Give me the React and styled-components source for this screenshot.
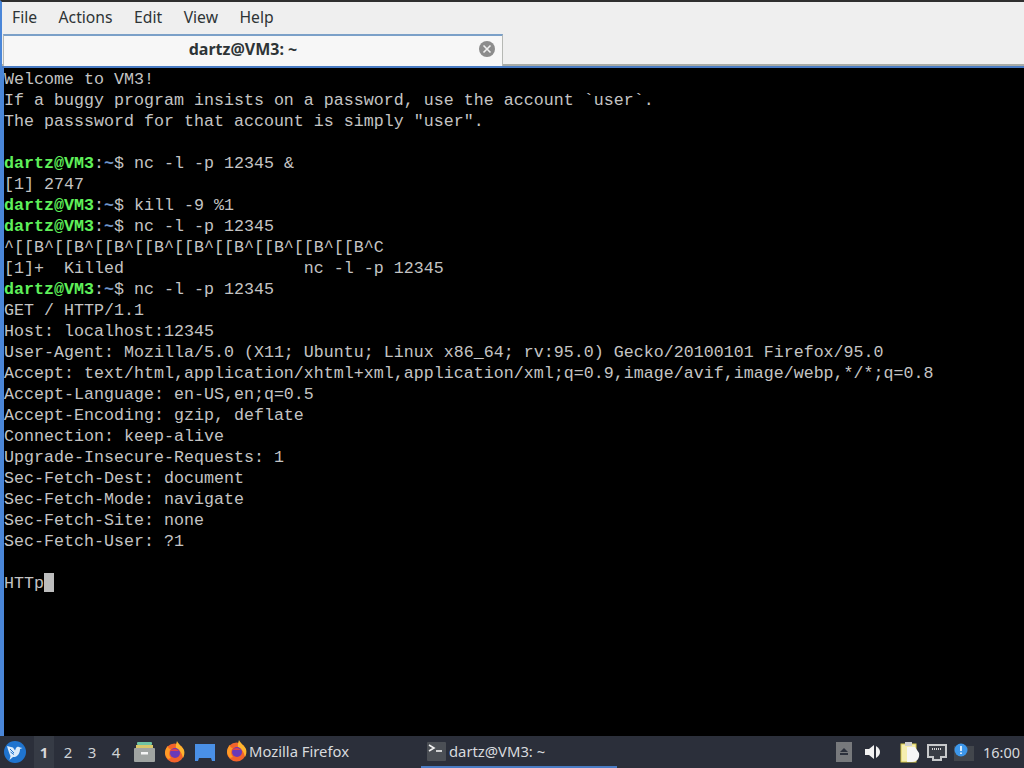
import React from "react";
import styled, { createGlobalStyle } from "styled-components";

const Global = createGlobalStyle`
  html, body {
    margin: 0;
    padding: 0;
    background: #000;
    overflow: hidden;
  }
`;

const Screen = styled.div`
  width: 1024px;
  height: 768px;
  display: flex;
  flex-direction: column;
  background: #000;
  overflow: hidden;
`;

const Window = styled.div`
  flex: 1;
  min-height: 0;
  display: flex;
  flex-direction: column;
  border-top: 2px solid #2f2f2f;
  border-left: 2px solid #4a86d8;
  background: #efefef;
`;

const MenuBar = styled.div`
  height: 32px;
  display: flex;
  align-items: center;
  gap: 21.5px;
  padding: 0 0 2px 10px;
  box-sizing: border-box;
  background: #efefef;
  font: 15.7px "Noto Sans", "Open Sans", sans-serif;
  color: #2e3436;
`;

const TabRow = styled.div`
  height: 32px;
  flex: none;
  display: flex;
  box-sizing: border-box;
  border-bottom: 2px solid #a9aca6;
  background: #efefef;
`;

const Tab = styled.div`
  width: 500px;
  height: 32px;
  margin-left: 1px;
  box-sizing: border-box;
  position: relative;
  display: flex;
  align-items: center;
  justify-content: center;
  padding: 0 20px 4px 0;
  border: 1px solid #b6b8b4;
  border-top: 2px solid #7ba0c8;
  border-bottom: none;
  background: #f7f7f7;
  font: 700 16px "Noto Sans", "Open Sans", sans-serif;
  color: #2e3436;
`;

const TabClose = styled.span`
  position: absolute;
  right: 6px;
  top: 4px;
  display: flex;
`;

const AccentLine = styled.div`
  height: 2px;
  flex: none;
  background: #4a7cc4;
`;

const Terminal = styled.pre`
  flex: 1;
  margin: 0;
  padding: 1px 0 0 0;
  border-left: 2px solid #4a86d8;
  background: #000;
  color: #c4c4c4;
  font: 16.67px/21px "Liberation Mono", monospace;
  overflow: hidden;
`;

const Line = styled.div`
  height: 21px;
  white-space: pre;
`;

const User = styled.span`
  color: #5ff05a;
  font-weight: 700;
`;

const Path = styled.span`
  color: #6f94c8;
  font-weight: 700;
`;

const Cursor = styled.span`
  display: inline-block;
  width: 10px;
  height: 19px;
  vertical-align: -4px;
  background: #bdbdbd;
`;

const Taskbar = styled.div`
  height: 32px;
  flex: none;
  display: flex;
  align-items: center;
  background: #2b2f3a;
  color: #d8dade;
  font: 14.8px "Noto Sans", "Open Sans", sans-serif;
`;

const StartButton = styled.span`
  width: 34px;
  display: flex;
  justify-content: center;
  padding-right: 4px;
  box-sizing: border-box;
`;

const Workspace = styled.span`
  width: 20px;
  height: 32px;
  margin-right: 4px;
  display: flex;
  align-items: center;
  justify-content: center;
  font-size: 15px;
  font-weight: ${(p) => (p.$active ? 700 : 400)};
  color: ${(p) => (p.$active ? "#d8d8d8" : "#cfd2d6")};
  background: ${(p) => (p.$active ? "#363b45" : "transparent")};
`;

const Launchers = styled.div`
  width: 96px;
  display: flex;
  align-items: center;
  gap: 9px;
  padding-left: 4px;
  box-sizing: border-box;
`;

const TaskButton = styled.div`
  width: ${(p) => p.$width}px;
  height: 32px;
  box-sizing: border-box;
  display: flex;
  align-items: center;
  gap: ${(p) => p.$gap}px;
  padding-left: ${(p) => p.$pad}px;
  border-bottom: 2px solid ${(p) => (p.$active ? "#4a7cc4" : "transparent")};
`;

const Spacer = styled.div`
  flex: 1;
`;

const Tray = styled.div`
  display: flex;
  align-items: center;
  padding-right: 4px;
`;

const TrayIcon = styled.span`
  display: flex;
  margin-right: ${(p) => p.$gap || 0}px;
`;

const Clock = styled.span`
  margin-left: 9px;
  font-size: 14.5px;
  color: #d8dade;
`;

const CloseIcon = () => (
  <svg width="18" height="18" viewBox="0 0 18 18">
    <circle cx="9" cy="9" r="8" fill="#8c8c8c" />
    <path d="M5.500 5.500l7 7M12.500 5.500l-7 7" stroke="#f0f0f0" strokeWidth="1.6" />
  </svg>
);

// bird with raised wings, head to the right
const BirdLogo = () => (
  <svg width="22" height="22" viewBox="0 0 22 22">
    <circle cx="11" cy="11" r="11" fill="#1f74cf" />
    <path d="M3 5l6 1.500 2 3 1-2.500c1-1.500 3-1.500 4-.5l2.500 .5-2.500 1c0 4-2 7-5 8l-2 0-3.500 3 1-4C5.500 13 4 9 3 5z" fill="#dcebfa" />
    <path d="M6 8l4 4M6.500 11l3.500 2.500" stroke="#1f74cf" strokeWidth="1" fill="none" />
  </svg>
);

const FilesIcon = () => (
  <svg width="21" height="20" viewBox="0 0 21 20">
    <rect x="3" y="0" width="15" height="3" rx="1" fill="#6fc4a4" />
    <rect x="2" y="3" width="17" height="3" fill="#d9c76a" />
    <rect x="0" y="6" width="21" height="14" rx="1" fill="#a0a4a2" />
    <rect x="7" y="10" width="7" height="2.500" fill="#f4f4f4" />
  </svg>
);

const FirefoxIcon = ({ size = 22 }) => (
  <svg width={size} height={size} viewBox="0 0 22 22">
    <circle cx="10.500" cy="12" r="9.500" fill="#f2632b" />
    <path d="M13 0c1 3 5 5 7 9 1 3 0 6-1 8-1-5-3-8-6-9-2-1-1-5 0-8z" fill="#ffb52e" />
    <path d="M1 12c0-3 1-5 3-7 0 2 1 3 3 3-2 2-3 6 0 9l-3 1c-2-2-3-4-3-6z" fill="#ff9a26" />
    <circle cx="11" cy="12" r="5" fill="#6a3ab8" />
    <path d="M6 10c2-2 6-3 9 0-3 0-5 0-9 0z" fill="#e0434b" />
  </svg>
);

const DesktopIcon = () => (
  <svg width="20" height="17" viewBox="0 0 20 17">
    <path d="M0 0h20v17h-3l-1-3H4l-1 3H0z" fill="#4a90e6" />
  </svg>
);

const TerminalIcon = () => (
  <svg width="19" height="19" viewBox="0 0 19 19">
    <rect width="19" height="19" rx="1" fill="#4b4f55" />
    <path d="M2 3l5 3-5 3" stroke="#f0f0f0" strokeWidth="1.6" fill="none" />
    <path d="M9 9h6" stroke="#f0f0f0" strokeWidth="1.6" />
  </svg>
);

const EjectIcon = () => (
  <svg width="16" height="20" viewBox="0 0 16 20">
    <rect width="16" height="20" fill="#77797c" />
    <path d="M8 6l4 4H4zM4 11h8v2H4z" fill="#2c313c" />
  </svg>
);

const SpeakerIcon = () => (
  <svg width="18" height="18" viewBox="0 0 18 18">
    <path d="M1 6h4l5-4v14l-5-4H1z" fill="#f2f2f2" />
    <path d="M12 3c3 2 4 4 4 6s-1 4-4 6z" fill="#f2f2f2" />
  </svg>
);

const ClipboardIcon = () => (
  <svg width="20" height="22" viewBox="0 0 20 22">
    <rect x="1" y="3" width="15" height="18" fill="#f5eeb0" stroke="#d8c94c" />
    <rect x="5" y="1" width="7" height="4" fill="#cfcfcf" />
    <path d="M7 6h8l4 6c1 5-2 9-7 9H7z" fill="#f6f6f6" />
  </svg>
);

const NetworkIcon = () => (
  <svg width="20" height="17" viewBox="0 0 20 17">
    <path d="M1 1h18v12h-5v3H6v-3H1z" fill="#3a3e46" stroke="#c7c9cb" strokeWidth="2" />
    <path d="M5 5h10" stroke="#d8d8d8" strokeWidth="2" strokeDasharray="1 1" />
  </svg>
);

const NoticeIcon = () => (
  <svg width="20" height="18" viewBox="0 0 20 18">
    <rect x="0" y="3" width="20" height="15" fill="#42464c" />
    <circle cx="7" cy="7" r="6.500" fill="#3d97ea" />
    <path d="M7 3v5M7 9.500v1.500" stroke="#fff" strokeWidth="1.6" />
  </svg>
);

const plainTop = [
  "Welcome to VM3!",
  "If a buggy program insists on a password, use the account `user`.",
  'The passsword for that account is simply "user".',
  "",
];

const plainBottom = [
  "GET / HTTP/1.1",
  "Host: localhost:12345",
  "User-Agent: Mozilla/5.0 (X11; Ubuntu; Linux x86_64; rv:95.0) Gecko/20100101 Firefox/95.0",
  "Accept: text/html,application/xhtml+xml,application/xml;q=0.9,image/avif,image/webp,*/*;q=0.8",
  "Accept-Language: en-US,en;q=0.5",
  "Accept-Encoding: gzip, deflate",
  "Connection: keep-alive",
  "Upgrade-Insecure-Requests: 1",
  "Sec-Fetch-Dest: document",
  "Sec-Fetch-Mode: navigate",
  "Sec-Fetch-Site: none",
  "Sec-Fetch-User: ?1",
  "",
];

const Prompt = ({ cmd }) => (
  <Line>
    <User>dartz@VM3</User>:<Path>~</Path>$ {cmd}
  </Line>
);

export default function App() {
  return (
    <Screen>
      <Global />
      <Window>
        <MenuBar>
          <span>File</span>
          <span>Actions</span>
          <span>Edit</span>
          <span>View</span>
          <span>Help</span>
        </MenuBar>
        <TabRow>
          <Tab>
            dartz@VM3: ~
            <TabClose>
              <CloseIcon />
            </TabClose>
          </Tab>
        </TabRow>
        <AccentLine />
        <Terminal>
          {plainTop.map((t, i) => (
            <Line key={i}>{t}</Line>
          ))}
          <Prompt cmd="nc -l -p 12345 &" />
          <Line>[1] 2747</Line>
          <Prompt cmd="kill -9 %1" />
          <Prompt cmd="nc -l -p 12345" />
          <Line>^[[B^[[B^[[B^[[B^[[B^[[B^[[B^[[B^[[B^C</Line>
          <Line>{"[1]+  Killed                  nc -l -p 12345"}</Line>
          <Prompt cmd="nc -l -p 12345" />
          {plainBottom.map((t, i) => (
            <Line key={i}>{t}</Line>
          ))}
          <Line>
            HTTp
            <Cursor />
          </Line>
        </Terminal>
      </Window>
      <Taskbar>
        <StartButton>
          <BirdLogo />
        </StartButton>
        <Workspace $active>1</Workspace>
        <Workspace>2</Workspace>
        <Workspace>3</Workspace>
        <Workspace>4</Workspace>
        <Launchers>
          <FilesIcon />
          <FirefoxIcon />
          <DesktopIcon />
        </Launchers>
        <TaskButton $width={195} $pad={0} $gap={1}>
          <FirefoxIcon />
          Mozilla Firefox
        </TaskButton>
        <TaskButton $active $width={196} $pad={6} $gap={3}>
          <TerminalIcon />
          dartz@VM3: ~
        </TaskButton>
        <Spacer />
        <Tray>
          <TrayIcon $gap={12}>
            <EjectIcon />
          </TrayIcon>
          <TrayIcon $gap={18}>
            <SpeakerIcon />
          </TrayIcon>
          <TrayIcon $gap={7}>
            <ClipboardIcon />
          </TrayIcon>
          <TrayIcon $gap={7}>
            <NetworkIcon />
          </TrayIcon>
          <TrayIcon>
            <NoticeIcon />
          </TrayIcon>
          <Clock>16:00</Clock>
        </Tray>
      </Taskbar>
    </Screen>
  );
}
